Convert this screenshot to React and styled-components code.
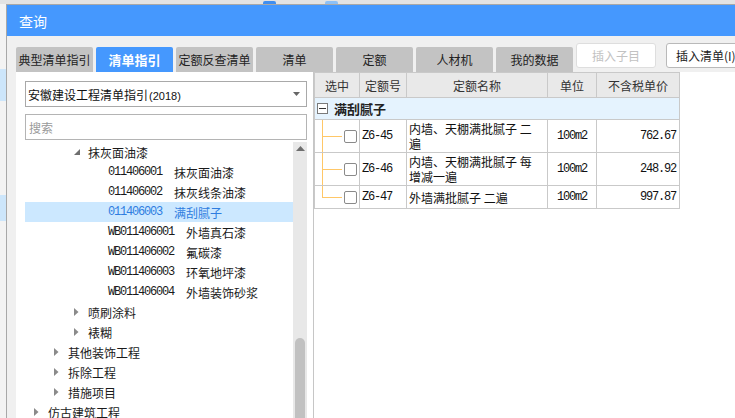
import React from "react";
import styled, { createGlobalStyle } from "styled-components";

const GlobalStyle = createGlobalStyle`
  html, body {
    margin: 0;
    padding: 0;
    overflow: hidden;
  }
  body {
    background: #f3f3f3;
    font-family: "Noto Sans CJK SC", "Noto Sans", sans-serif;
    font-size: 12px;
    color: #222;
  }
`;

const mono = `"Liberation Mono", "DejaVu Sans Mono", monospace`;

const tabs = ["典型清单指引", "清单指引", "定额反查清单", "清单", "定额", "人材机", "我的数据"];

const tree = [
  { level: 2, label: "抹灰面油漆", toggle: "open" },
  { level: 3, code: "011406001", label: "抹灰面油漆" },
  { level: 3, code: "011406002", label: "抹灰线条油漆" },
  { level: 3, code: "011406003", label: "满刮腻子", selected: true },
  { level: 3, code: "WB011406001", label: "外墙真石漆" },
  { level: 3, code: "WB011406002", label: "氟碳漆" },
  { level: 3, code: "WB011406003", label: "环氧地坪漆" },
  { level: 3, code: "WB011406004", label: "外墙装饰砂浆" },
  { level: 2, label: "喷刷涂料", toggle: "closed" },
  { level: 2, label: "裱糊", toggle: "closed" },
  { level: 1, label: "其他装饰工程", toggle: "closed" },
  { level: 1, label: "拆除工程", toggle: "closed" },
  { level: 1, label: "措施项目", toggle: "closed" },
  { level: 0, label: "仿古建筑工程", toggle: "closed" },
];

const quotas = [
  { code: "Z6-45", name: "内墙、天棚满批腻子 二遍", unit: "100m2", price: "762.67" },
  { code: "Z6-46", name: "内墙、天棚满批腻子 每增减一遍", unit: "100m2", price: "248.92" },
  { code: "Z6-47", name: "外墙满批腻子 二遍", unit: "100m2", price: "997.87" },
];

function Toggle({ type }) {
  if (type === "open") {
    return (
      <ToggleBox>
        <svg width="7" height="7" viewBox="0 0 7 7">
          <polygon points="6,0 6,6 0,6" fill="#6f6f6f" />
        </svg>
      </ToggleBox>
    );
  }
  if (type === "closed") {
    return (
      <ToggleBox>
        <svg width="5" height="8" viewBox="0 0 5 8">
          <polygon points="0,0 4.5,4 0,8" fill="#8a8a8a" />
        </svg>
      </ToggleBox>
    );
  }
  return <ToggleBox />;
}

function App() {
  return (
    <Screen>
      <GlobalStyle />
      <AppTop>
        <TopMark $left={263} $width={13} />
        <TopMark $left={49} $width={13} $pale />
      </AppTop>
      <MainRow>
        <SideStrip>
          <SideBlock $top={65} $height={32} />
          <SideBlock $top={94} $height={26} />
        </SideStrip>
        <Dialog>
          <TitleBar>查询</TitleBar>
          <Body>
            <TabRow>
              {tabs.map((t) => (
                <Tab key={t} $active={t === "清单指引"}>
                  {t}
                </Tab>
              ))}
              <ActionButton $disabled $gap={3}>插入子目</ActionButton>
              <ActionButton $gap={10}>插入清单(I)</ActionButton>
            </TabRow>
            <Content>
              <LeftPanel>
                <SelectBox>
                  <span>
                    安徽建设工程清单指引<Year>(2018)</Year>
                  </span>
                  <svg width="7" height="4" viewBox="0 0 7 4">
                    <polygon points="0,0 7,0 3.5,4" fill="#666" />
                  </svg>
                </SelectBox>
                <SearchBox placeholder="搜索" />
                <TreeArea>
                  <TreeList>
                    {tree.map((n, i) => (
                      <TreeRow key={i} $level={n.level} $selected={n.selected}>
                        <Toggle type={n.toggle} />
                        {n.code && <Code>{n.code}</Code>}
                        <span>{n.label}</span>
                      </TreeRow>
                    ))}
                  </TreeList>
                  <ScrollBar>
                    <ScrollArrow>
                      <svg width="9" height="5" viewBox="0 0 9 5">
                        <polygon points="0,5 4.5,0 9,5" fill="#6e6e6e" />
                      </svg>
                    </ScrollArrow>
                    <ScrollThumb />
                  </ScrollBar>
                </TreeArea>
              </LeftPanel>
              <RightPanel>
                <Grid>
                  <HeadCell>选中</HeadCell>
                  <HeadCell>定额号</HeadCell>
                  <HeadCell>定额名称</HeadCell>
                  <HeadCell>单位</HeadCell>
                  <HeadCell>不含税单价</HeadCell>
                  <GroupCell>
                    <MinusBox />
                    <GroupTitle>满刮腻子</GroupTitle>
                  </GroupCell>
                  {quotas.map((q, i) => (
                    <React.Fragment key={q.code}>
                      <PickCell>
                        <Connector>
                          <LineTop />
                          <LineBottom $last={i === quotas.length - 1} />
                        </Connector>
                        <CheckBox />
                      </PickCell>
                      <Cell $mono>{q.code}</Cell>
                      <NameCell>{q.name}</NameCell>
                      <Cell $mono $align="center">{q.unit}</Cell>
                      <Cell $mono $align="right">{q.price}</Cell>
                    </React.Fragment>
                  ))}
                </Grid>
              </RightPanel>
            </Content>
          </Body>
        </Dialog>
      </MainRow>
    </Screen>
  );
}

export default App;

const Screen = styled.div`
  width: 735px;
  height: 418px;
  overflow: hidden;
  display: flex;
  flex-direction: column;
`;

const AppTop = styled.div`
  height: 4px;
  flex-shrink: 0;
  background: #e3e3e3;
  display: flex;
  align-items: flex-end;
`;

const TopMark = styled.div`
  margin-left: ${(p) => p.$left}px;
  width: ${(p) => p.$width}px;
  height: 3px;
  border-radius: 2px 2px 0 0;
  background: ${(p) => (p.$pale ? "#8cc0f7" : "#3f8ef0")};
`;

const MainRow = styled.div`
  flex: 1;
  min-height: 0;
  display: flex;
`;

const SideStrip = styled.div`
  width: 6px;
  flex-shrink: 0;
  background: #f3f3f3;
  display: flex;
  flex-direction: column;
`;

const SideBlock = styled.div`
  margin-top: ${(p) => p.$top}px;
  height: ${(p) => p.$height}px;
  background: #cde6fb;
`;

const Dialog = styled.div`
  flex: 1;
  min-width: 0;
  display: flex;
  flex-direction: column;
  background: #f0f0f0;
  border-top: 1px solid #a8a8a8;
  border-left: 1px solid #a8a8a8;
`;

const TitleBar = styled.div`
  height: 31px;
  flex-shrink: 0;
  background: #4598fe;
  color: #fff;
  font-size: 14px;
  display: flex;
  align-items: center;
  padding-left: 12px;
`;

const Body = styled.div`
  flex: 1;
  min-height: 0;
  display: flex;
  flex-direction: column;
  padding: 7px 0 0 9px;
`;

const TabRow = styled.div`
  height: 29px;
  flex-shrink: 0;
  display: flex;
  gap: 3px;
`;

const Tab = styled.div`
  align-self: flex-end;
  width: 77px;
  height: 25px;
  flex-shrink: 0;
  display: flex;
  align-items: center;
  justify-content: center;
  border-radius: 2px 2px 0 0;
  background: ${(p) => (p.$active ? "#4598fe" : "#c3c3c3")};
  color: ${(p) => (p.$active ? "#fff" : "#222")};
  font-size: ${(p) => (p.$active ? "13px" : "12px")};
  font-weight: ${(p) => (p.$active ? 700 : 400)};
`;

const ActionButton = styled.div`
  align-self: flex-start;
  margin-left: ${(p) => p.$gap - 3}px;
  width: 80px;
  height: 25px;
  flex-shrink: 0;
  box-sizing: border-box;
  display: flex;
  align-items: center;
  justify-content: ${(p) => (p.$disabled ? "center" : "flex-start")};
  padding-left: ${(p) => (p.$disabled ? 0 : 9)}px;
  background: #fff;
  border: 1px solid ${(p) => (p.$disabled ? "#dedede" : "#b9b9b9")};
  border-radius: 3px;
  color: ${(p) => (p.$disabled ? "#c2c2c2" : "#222")};
  font-size: 12px;
  white-space: nowrap;
`;

const Content = styled.div`
  flex: 1;
  min-height: 0;
  display: flex;
`;

const LeftPanel = styled.div`
  width: 297px;
  flex-shrink: 0;
  box-sizing: border-box;
  background: #fff;
  padding: 9px 6px 0 9px;
  display: flex;
  flex-direction: column;
`;

const SelectBox = styled.div`
  height: 26px;
  flex-shrink: 0;
  box-sizing: border-box;
  border: 1px solid #a9a9a9;
  display: flex;
  align-items: center;
  justify-content: space-between;
  padding: 0 6px 0 2px;
  font-size: 12px;
  color: #111;
`;

const Year = styled.span`
  font-family: "Liberation Sans", sans-serif;
  font-size: 11px;
  margin-left: 1px;
`;

const SearchBox = styled.input`
  margin: 7px 0 0;
  height: 26px;
  flex-shrink: 0;
  box-sizing: border-box;
  border: 1px solid #b4b4b4;
  padding: 0 3px;
  outline: none;
  font-family: "Noto Sans CJK SC", sans-serif;
  font-size: 12px;
  &::placeholder {
    color: #9a9a9a;
  }
`;

const TreeArea = styled.div`
  flex: 1;
  min-height: 0;
  margin-top: 2px;
  display: flex;
`;

const TreeList = styled.div`
  flex: 1;
  display: flex;
  flex-direction: column;
`;

const TreeRow = styled.div`
  height: 20px;
  flex-shrink: 0;
  display: flex;
  align-items: center;
  padding-left: ${(p) => 9 + p.$level * 20}px;
  background: ${(p) => (p.$selected ? "#cce8ff" : "transparent")};
  color: ${(p) => (p.$selected ? "#2f7ddf" : "#1a1a1a")};
  font-size: 12px;
  white-space: nowrap;
`;

const ToggleBox = styled.span`
  width: 14px;
  flex-shrink: 0;
  display: flex;
  align-items: center;
`;

const Code = styled.span`
  font-family: ${mono};
  font-size: 12px;
  letter-spacing: -1.2px;
  margin-right: 12px;
`;

const ScrollBar = styled.div`
  width: 14px;
  flex-shrink: 0;
  background: #e8e8e8;
  display: flex;
  flex-direction: column;
  align-items: center;
`;

const ScrollArrow = styled.div`
  height: 10px;
  display: flex;
  align-items: center;
  margin-top: 1px;
`;

const ScrollThumb = styled.div`
  margin-top: auto;
  width: 10px;
  height: 80px;
  background: #c1c1c1;
  border-radius: 5px 5px 0 0;
`;

const RightPanel = styled.div`
  flex: 1;
  min-width: 0;
  background: #fff;
  border-left: 1px solid #c6c6c6;
`;

const Grid = styled.div`
  display: grid;
  grid-template-columns: 45px 47px 141px 49px 83px;
  grid-template-rows: 25px 22px 33px 33px 23px;
  width: max-content;
  border-top: 1px solid #c9c9c9;
  border-left: 1px solid #c9c9c9;
`;

const Cell = styled.div`
  box-sizing: border-box;
  border-right: 1px solid #c9c9c9;
  border-bottom: 1px solid #c9c9c9;
  display: flex;
  align-items: center;
  justify-content: ${(p) =>
    p.$align === "center" ? "center" : p.$align === "right" ? "flex-end" : "flex-start"};
  text-align: ${(p) => p.$align || "left"};
  padding: 0 ${(p) => (p.$align === "right" ? 3 : 2)}px 0 2px;
  font-family: ${(p) => (p.$mono ? mono : `"Noto Sans CJK SC", sans-serif`)};
  font-size: 12px;
  letter-spacing: ${(p) => (p.$mono ? "-1.2px" : "0")};
  line-height: 15px;
  color: #111;
`;

const NameCell = styled(Cell)`
  padding-right: 4px;
`;

const HeadCell = styled(Cell)`
  justify-content: center;
  background: #e9e9e9;
  color: #333;
`;

const GroupCell = styled(Cell)`
  grid-column: 1 / -1;
  background: #e5f3fe;
  padding-left: 2px;
`;

const MinusBox = styled.span`
  width: 11px;
  height: 11px;
  box-sizing: border-box;
  border: 1px solid #7a7a7a;
  background: #fff;
  display: flex;
  align-items: center;
  justify-content: center;
  &::before {
    content: "";
    width: 7px;
    height: 1px;
    background: #333;
  }
`;

const GroupTitle = styled.span`
  margin-left: 6px;
  font-weight: 700;
  font-size: 13px;
  color: #222;
`;

const PickCell = styled(Cell)`
  padding: 0;
  align-items: stretch;
`;

const Connector = styled.div`
  width: 20px;
  margin-left: 7px;
  display: flex;
  flex-direction: column;
`;

const LineTop = styled.div`
  flex: 1;
  border-left: 1px solid #ffc767;
  border-bottom: 1px solid #ffc767;
`;

const LineBottom = styled.div`
  flex: 1;
  border-left: 1px solid ${(p) => (p.$last ? "transparent" : "#ffc767")};
`;

const CheckBox = styled.span`
  align-self: center;
  margin-left: 2px;
  width: 13px;
  height: 13px;
  box-sizing: border-box;
  border: 1px solid #8a8a8a;
  border-radius: 2px;
  background: #fff;
`;
